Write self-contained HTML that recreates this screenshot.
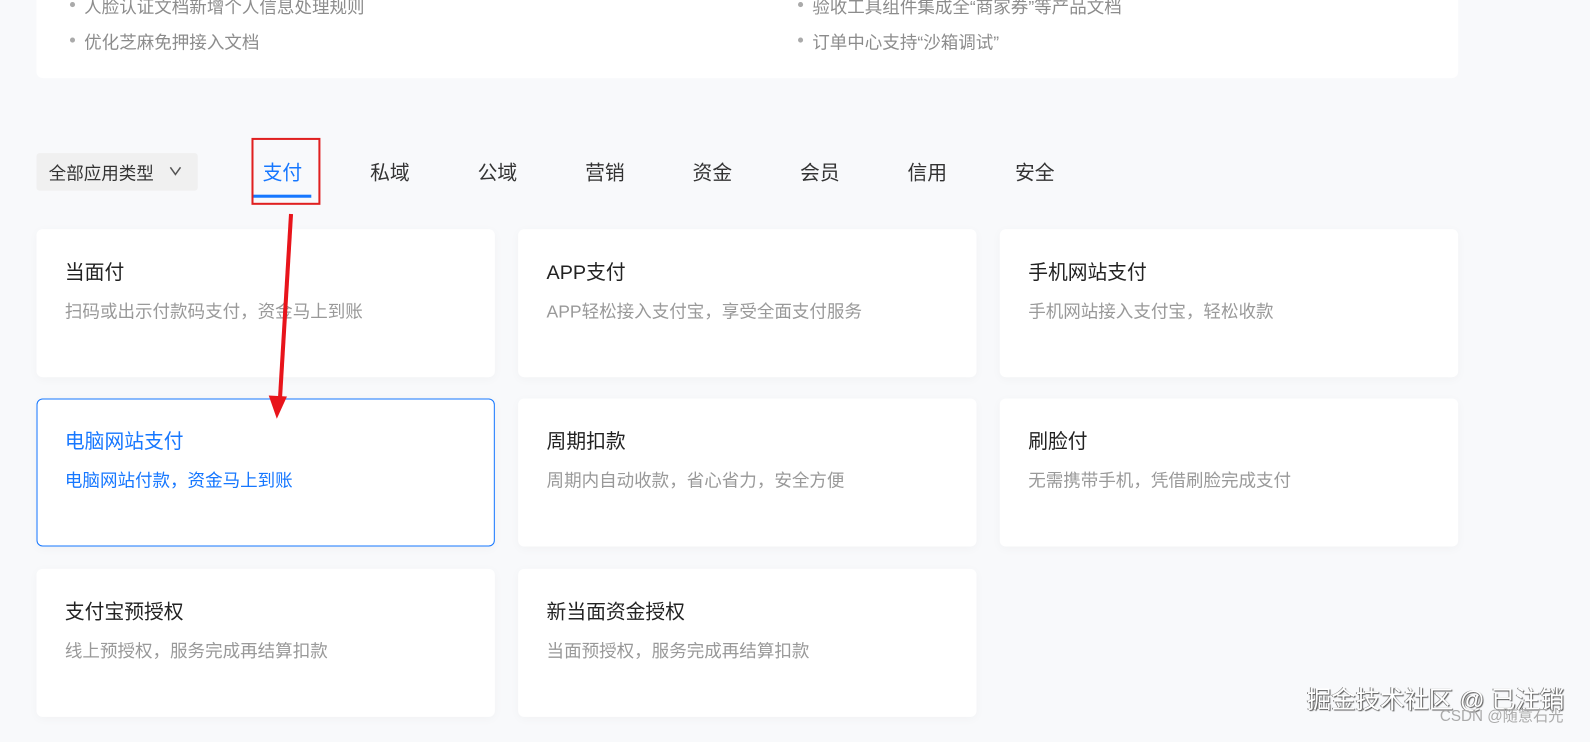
<!DOCTYPE html><html><head><meta charset="utf-8"><style>
body{margin:0;width:1590px;height:732px;background:#f8f9fb;font-family:"Liberation Sans","Noto Sans CJK SC",sans-serif;position:relative;overflow:hidden}
#w{position:absolute;left:0;top:0;width:1568px;height:722px;transform:scale(1.014);transform-origin:0 0}
.a{position:absolute}
.top{left:36px;top:-10px;width:1402px;height:87px;background:#fff;border-radius:6px}
.li{font-size:17.3px;color:#8c8c8c}
.li:before{content:"";position:absolute;left:-14px;top:9px;width:5px;height:5px;border-radius:50%;background:#aaa}
.card{width:452px;height:146px;background:#fff;border-radius:6px;box-shadow:0 2px 10px rgba(0,0,0,.03);box-sizing:border-box}
.card .t{position:absolute;left:28px;top:26px;font-size:19.5px;color:#222}
.card .d{position:absolute;left:28px;top:67px;font-size:17.3px;color:#999}
.tab{font-size:19.5px;color:#333;top:154px}
</style></head><body><div id="w">
<div class="a top"></div>
<div class="a li" style="left:83px;top:-7px">人脸认证文档新增个人信息处理规则</div>
<div class="a li" style="left:83px;top:28px">优化芝麻免押接入文档</div>
<div class="a li" style="left:801px;top:-7px">验收工具组件集成全“商家券”等产品文档</div>
<div class="a li" style="left:801px;top:28px">订单中心支持“沙箱调试”</div>
<div class="a" style="left:36px;top:151px;width:159px;height:37px;background:#f0f0f0;border-radius:3px"></div>
<div class="a" style="left:48px;top:157px;font-size:17.3px;color:#333">全部应用类型</div>
<svg class="a" style="left:166px;top:162px" width="14" height="12"><path d="M2 3L7 10L12 3" fill="none" stroke="#555" stroke-width="1.5"/></svg>
<div class="a tab" style="left:259px;color:#1677ff">支付</div>
<div class="a" style="left:250px;top:192px;width:57px;height:3px;background:#1677ff"></div>
<div class="a" style="left:248px;top:136px;width:64px;height:62px;border:2px solid #e02020"></div>
<div class="a tab" style="left:365px">私域</div>
<div class="a tab" style="left:471px">公域</div>
<div class="a tab" style="left:577px">营销</div>
<div class="a tab" style="left:683px">资金</div>
<div class="a tab" style="left:789px">会员</div>
<div class="a tab" style="left:895px">信用</div>
<div class="a tab" style="left:1001px">安全</div>
<div class="a card" style="left:36px;top:226px"><div class="t">当面付</div><div class="d">扫码或出示付款码支付，资金马上到账</div></div>
<div class="a card" style="left:511px;top:226px"><div class="t">APP支付</div><div class="d">APP轻松接入支付宝，享受全面支付服务</div></div>
<div class="a card" style="left:986px;top:226px"><div class="t">手机网站支付</div><div class="d">手机网站接入支付宝，轻松收款</div></div>
<div class="a card" style="left:36px;top:393px;border:1px solid #1677ff"><div class="t" style="color:#1677ff;left:27px;top:25px">电脑网站支付</div><div class="d" style="color:#1677ff;left:27px;top:66px">电脑网站付款，资金马上到账</div></div>
<div class="a card" style="left:511px;top:393px"><div class="t">周期扣款</div><div class="d">周期内自动收款，省心省力，安全方便</div></div>
<div class="a card" style="left:986px;top:393px"><div class="t">刷脸付</div><div class="d">无需携带手机，凭借刷脸完成支付</div></div>
<div class="a card" style="left:36px;top:561px"><div class="t">支付宝预授权</div><div class="d">线上预授权，服务完成再结算扣款</div></div>
<div class="a card" style="left:511px;top:561px"><div class="t">新当面资金授权</div><div class="d">当面预授权，服务完成再结算扣款</div></div>
<svg class="a" style="left:0;top:0" width="1590" height="732"><path d="M287 211L276 395" stroke="#e8141b" stroke-width="4"/><path d="M265 390L273 413L283 391Z" fill="#e8141b"/></svg>
<div class="a" style="left:1289px;top:670px;font-size:24px;color:#fff;text-shadow:1px 1px 1px #555,-1px 0 0 #888">掘金技术社区 @ 已注销</div>
<div class="a" style="left:1420px;top:695px;font-size:15px;color:#aaa">CSDN @随意石光</div>
</div></body></html>
